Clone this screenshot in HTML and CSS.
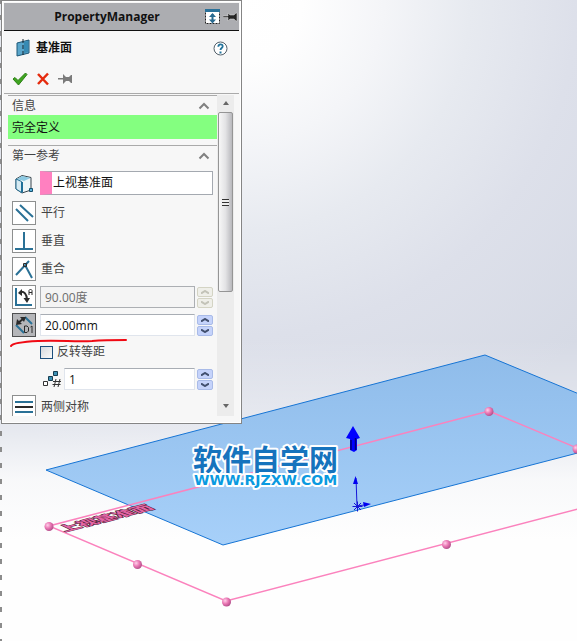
FILE: index.html
```html
<!DOCTYPE html>
<html lang="zh-CN">
<head>
<meta charset="utf-8">
<meta name="viewport" content="width=device-width, initial-scale=1">
<title>PropertyManager</title>
<link rel="stylesheet" href="styles.css">
</head>
<body>
<main class="viewport">
  <svg class="scene" viewBox="0 0 577 641" preserveAspectRatio="xMinYMin slice" role="img" aria-label="上视基准面">
    <defs>
      <linearGradient id="fade" gradientUnits="userSpaceOnUse" x1="0" y1="340" x2="0" y2="540">
        <stop offset="0" stop-color="#fff" stop-opacity="0"/>
        <stop offset=".45" stop-color="#fff" stop-opacity=".4"/>
        <stop offset=".7" stop-color="#fefefe" stop-opacity=".85"/>
        <stop offset="1" stop-color="#fefefe"/>
      </linearGradient>
      <radialGradient id="sky" gradientUnits="userSpaceOnUse" cx="240" cy="0" r="480">
        <stop offset="0" stop-color="#fff"/>
        <stop offset=".13" stop-color="#fefefe"/>
        <stop offset=".3" stop-color="#f4f5f8"/>
        <stop offset=".48" stop-color="#e7eaf0"/>
        <stop offset=".7" stop-color="#dde0ea"/>
        <stop offset="1" stop-color="#d6dae5"/>
      </radialGradient>
      <linearGradient id="plane" x1="0" y1="0" x2="0" y2="1">
        <stop offset="0" stop-color="#8fbcea"/>
        <stop offset="1" stop-color="#a7d0f9"/>
      </linearGradient>
      <radialGradient id="ball" cx=".35" cy=".35" r=".7">
        <stop offset="0" stop-color="#ffd0ea"/>
        <stop offset=".5" stop-color="#ea78b4"/>
        <stop offset="1" stop-color="#b04c88"/>
      </radialGradient>
    </defs>
    <rect width="577" height="641" fill="url(#sky)"/>
    <rect width="577" height="641" fill="url(#fade)"/>
    <path d="M0 -1V641" stroke="#8c8c8c" stroke-width="4" stroke-dasharray="5 11"/>
    <path d="M46 470 485 355 620 411 620 442 223 545Z" fill="url(#plane)" stroke="#1674d4"/>
    <path d="M620 466 489 411 49 526 226 601 620 498" fill="none" stroke="#fb82bd" stroke-width="1.500"/>
    <g fill="url(#ball)">
      <circle cx="489" cy="411.500" r="4.500"/><circle cx="577" cy="449" r="4.500"/><circle cx="49" cy="526.500" r="4.500"/>
      <circle cx="137.500" cy="564.500" r="4.500"/><circle cx="226.500" cy="602" r="4.500"/><circle cx="446.500" cy="544.500" r="4.500"/>
    </g>
    <text class="plane-name" transform="matrix(1 -.26 .7 .33 65 532)">上视基准面</text>
    <path d="M353 426 360 438 357 439V450L354 452 350 450V439L346 438Z" fill="#00f"/>
    <path d="M355.500 438V450M351 440v10" stroke="#000078" stroke-width="1.500"/>
    <g stroke="#1616d8" fill="#0000f0">
      <path d="M357 506 356 478M357 506 364 505M354 503l7 7M361 503l-7 7M352.500 506.500h10M357.500 501.500v10" fill="none"/>
      <path d="M355.500 476 358 484H353ZM363 502 371 504 364 507Z" stroke="none"/>
    </g>
    <text class="mark-title" x="193" y="471">软件自学网</text>
    <text class="mark-url" x="194" y="485">WWW.RJZXW.COM</text>
  </svg>

  <form class="panel">
    <header class="titlebar">
      <h1>PropertyManager</h1>
      <button type="button" class="icon-button" aria-label="展开">
        <svg width="15" height="15" viewBox="0 0 15 15"><path d="M.5.500h14v14H.5z" fill="#fff" stroke="#222" stroke-dasharray="2 1"/><path d="M0 0h15v3H0z" fill="#2a7199"/><path d="M7.500 5v8" stroke="#2a6b90" stroke-width="2"/><path d="M4 8 7.500 4 11 8ZM4 10.500 7.500 14.500 11 10.500Z" fill="#2a6b90"/></svg>
      </button>
      <button type="button" class="icon-button" aria-label="固定">
        <svg width="15" height="12" viewBox="0 0 15 12"><path d="M0 5h5V2l2 2h4l2-2h1v8h-1l-2-2H7l-2 2V6.500H0z" fill="#252525" stroke="#ddd" stroke-width=".5"/></svg>
      </button>
    </header>

    <div class="feature">
      <svg width="14" height="18" viewBox="0 0 14 18"><path d="M1 4 13 1V14L1 17Z" fill="#5aa6cb" stroke="#1d5878"/><path d="M8 3l4-1v11l-4 1z" fill="#378bb4"/><path d="M7 0V18" stroke="#14252e" stroke-dasharray="4 2"/></svg>
      <h2>基准面</h2>
      <button type="button" class="icon-button" aria-label="帮助">
        <svg width="15" height="15" viewBox="0 0 15 15"><circle cx="7.500" cy="7.500" r="6.500" fill="#fff" stroke="#53606a"/><path d="M5.300 5.800C5.300 2.600 9.700 2.700 9.700 5.300 9.700 7 7.500 7 7.500 9" fill="none" stroke="#23749c" stroke-width="1.800"/><path d="M6.500 10.500h2v2h-2z" fill="#23749c"/></svg>
      </button>
    </div>

    <div class="actions">
      <button type="submit" class="icon-button" aria-label="确定"><svg width="16" height="14" viewBox="0 0 16 14"><path d="M1 7 3 5.500 6 8.500 13.500 1 15 2.500 6.500 13Z" fill="#3fa51f" stroke="#2b8014"/></svg></button>
      <button type="reset" class="icon-button" aria-label="取消"><svg width="14" height="14" viewBox="0 0 14 14"><path d="M2 2 12 12.500M12 1.500 2 12" stroke="#e52b0e" stroke-width="2.500"/></svg></button>
      <button type="button" class="icon-button" aria-label="保持可见"><svg width="15" height="12" viewBox="0 0 15 12"><path d="M0 5h5V1l3 3h3l2-2h1v8h-1l-2-2H8l-3 3V6.500H0z" fill="#7b7b7b"/></svg></button>
    </div>

    <div class="body">
      <div class="content">
        <section class="group">
          <h3>信息 <svg width="12" height="8" viewBox="0 0 12 8"><path d="M1.500 6.500 6 2l4.500 4.500"/></svg></h3>
          <p class="status">完全定义</p>
        </section>
        <section class="group">
          <h3>第一参考 <svg width="12" height="8" viewBox="0 0 12 8"><path d="M1.500 6.500 6 2l4.500 4.500"/></svg></h3>
          <div class="rows">
            <div class="row reference">
              <svg class="glyph" width="24" height="24" viewBox="0 0 24 24"><path d="M4 8 10 4.500 19 6.500V19L10 22 4 18Z" fill="#eef5f7" stroke="#38454c"/><path d="M4.500 8 10 5 18.500 7 12 10Z" fill="#8cc9e2"/><path d="M4 8 9.500 10.500V21.500L4 18Z" fill="#d6eaf2" stroke="#256f94"/><path d="M10 11V21.500" stroke="#1f6f98" stroke-width="2"/><path d="M17.500 17.500h3v3h-3z" fill="#5cb4dc" stroke="#15506e"/></svg>
              <input class="field picked" type="text" aria-label="第一参考" value="上视基准面">
            </div>
            <div class="row">
              <button type="button" class="tool" id="parallel" aria-label="平行"><svg width="22" height="22" viewBox="0 0 22 22"><path d="M3 7 15 19M7 3 20 15"/></svg></button>
              <label for="parallel">平行</label>
            </div>
            <div class="row">
              <button type="button" class="tool" id="perpendicular" aria-label="垂直"><svg width="22" height="22" viewBox="0 0 22 22"><path d="M2 19H20M11 2V19"/></svg></button>
              <label for="perpendicular">垂直</label>
            </div>
            <div class="row">
              <button type="button" class="tool" id="coincident" aria-label="重合"><svg width="22" height="22" viewBox="0 0 22 22"><path d="M3 17 16 3M12 7 19 20"/><path class="ink" d="M10.500 5.500h3v3h-3z"/></svg></button>
              <label for="coincident">重合</label>
            </div>
            <div class="row">
              <button type="button" class="tool" aria-label="角度"><svg width="22" height="22" viewBox="0 0 22 22"><path d="M3 2V19H19"/><path class="ink bold" d="M7 6C11 5 14 8 14 14"/><path class="fill" d="M5 7 9 3V10ZM10.500 12H17L14 17Z"/><path class="ink" d="M16 9V4.500L17.500 3 19 4.500V9M16 6.500h3"/></svg></button>
              <input class="field" type="text" aria-label="角度" value="90.00度" disabled>
              <span class="spin off"><button type="button" disabled aria-label="增加"><svg width="8" height="4" viewBox="0 0 8 4"><path d="M0 3.500 4 1l4 2.500"/></svg></button><button type="button" disabled aria-label="减少"><svg width="8" height="4" viewBox="0 0 8 4"><path d="M0 .500 4 3 8 .5"/></svg></button></span>
            </div>
            <div class="row offset">
              <button type="button" class="tool pressed" aria-label="偏移距离"><svg width="22" height="22" viewBox="0 0 22 22"><path d="M3 11 11 19M12 3 19 10"/><path class="ink bold" d="M5 9 10 5"/><path class="fill" d="M3 11 4 5 9 10ZM7 3 13 3 11 8Z"/><path class="ink" d="M11.500 12v6.500H14l1.500-1.500v-3.500L14 12ZM17.500 13 19 12v7"/></svg></button>
              <input class="field" type="text" aria-label="偏移距离" value="20.00mm">
              <span class="spin"><button type="button" aria-label="增加"><svg width="8" height="4" viewBox="0 0 8 4"><path d="M0 3.500 4 1l4 2.500"/></svg></button><button type="button" aria-label="减少"><svg width="8" height="4" viewBox="0 0 8 4"><path d="M0 .500 4 3 8 .5"/></svg></button></span>
              <svg class="stroke-mark" width="120" height="10" viewBox="0 0 120 10"><path d="M1 8C2 6 8 4 28 3 50 2 65 4 82 3 94 2 106 2 116 2"/></svg>
            </div>
            <div class="row flip">
              <input type="checkbox" id="flip"><label for="flip">反转等距</label>
            </div>
            <div class="row count">
              <svg width="20" height="20" viewBox="0 0 20 20"><path d="M1.500 12.500h4v4h-4z" fill="#fff" stroke="#333"/><path d="M6.500 7.500h4v4h-4zM11.500 2.500h4v4h-4z" fill="#3c91b4" stroke="#173c50"/><path d="M14 10l-2 8M18 10l-2 8M11 12.500h8M10.500 15.500h8" stroke="#333" fill="none"/></svg>
              <input class="field" type="text" aria-label="基准面数" value="1">
              <span class="spin"><button type="button" aria-label="增加"><svg width="8" height="4" viewBox="0 0 8 4"><path d="M0 3.500 4 1l4 2.500"/></svg></button><button type="button" aria-label="减少"><svg width="8" height="4" viewBox="0 0 8 4"><path d="M0 .500 4 3 8 .5"/></svg></button></span>
            </div>
            <div class="row">
              <button type="button" class="tool" id="mid" aria-label="两侧对称"><svg width="22" height="22" viewBox="0 0 22 22"><path d="M2 6H20M2 16H20"/><path class="ink bold" d="M2 11H20"/></svg></button>
              <label for="mid">两侧对称</label>
            </div>
          </div>
        </section>
      </div>
      <div class="scrollbar">
        <svg width="6" height="4" viewBox="0 0 6 4"><path d="M0 4 3 0l3 4z" fill="#666"/></svg>
        <div class="thumb"><span class="grip"></span></div>
        <svg width="6" height="4" viewBox="0 0 6 4"><path d="M0 0h6L3 4z" fill="#666"/></svg>
      </div>
    </div>
  </form>
</main>
</body>
</html>
```

FILE: styles.css
```css
* { box-sizing: border-box; }

body {
  margin: 0;
  font: 12px/16px "Open Sans", "Noto Sans CJK SC", sans-serif;
  color: #111;
}

h1, h2, h3, p { margin: 0; font-size: inherit; }
svg { display: block; flex: none; }
button, input { font: inherit; color: inherit; }

.viewport {
  position: relative;
  min-height: 100vh;
  overflow: hidden;
  padding-left: 1px;
}

.scene {
  position: absolute;
  inset: 0;
  width: 100%;
  height: 100%;
}

.plane-name {
  font: 700 18px "Noto Sans CJK SC", sans-serif;
  fill: #e565a6;
  stroke: #54283f;
  stroke-width: 2px;
  paint-order: stroke;
}

.mark-title, .mark-url {
  fill: #1673bd;
  stroke: #fff;
  stroke-width: 4px;
  stroke-linejoin: round;
  paint-order: stroke;
}

.mark-title { font: 700 29px "Noto Sans CJK SC", sans-serif; }
.mark-url { font: 700 14px "DejaVu Sans", sans-serif; fill: #0b9ae0; }

.panel {
  position: relative;
  width: 241px;
  padding: 2px 2px 6px;
  background: #f7f7f7;
  border: 1px solid #858585;
  box-shadow: inset 0 0 0 1px #fff;
}

.icon-button {
  display: block;
  padding: 0;
  border: 0;
  background: none;
}

.titlebar {
  display: flex;
  align-items: center;
  gap: 3px;
  height: 28px;
  padding-right: 1px;
  background: #acadb1;
  border-bottom: 1px solid #111;
}

.titlebar h1 {
  flex: 1;
  padding-left: 8px;
  text-align: center;
  font-weight: 700;
}

.feature {
  display: flex;
  align-items: center;
  gap: 6px;
  height: 34px;
  padding: 0 11px 0 12px;
}

.feature h2 { flex: 1; font-weight: 700; }

.actions {
  display: flex;
  align-items: center;
  gap: 8px;
  height: 29px;
  padding-left: 8px;
  border-bottom: 1px solid #aaa;
}

.body {
  display: flex;
  height: 321px;
  margin: 1px 5px 1px 4px;
  overflow: hidden;
}

.content { flex: 1; min-width: 0; }

.group { border-top: 1px solid #aaa; color: #444; }
.group + .group { margin-top: 6px; }

.group h3 {
  display: flex;
  align-items: center;
  justify-content: space-between;
  height: 19px;
  padding: 0 7px 0 4px;
  font-weight: 400;
}

.group h3 path { fill: none; stroke: #808080; stroke-width: 2; }

.status {
  height: 24px;
  padding: 5px 4px 3px;
  background: #84ff80;
  color: #111;
}

.rows {
  display: grid;
  grid-template-columns: minmax(0, 1fr);
  gap: 4px;
  padding: 6px 4px 0;
}

.row {
  display: flex;
  align-items: center;
  gap: 4px;
  height: 24px;
}

.reference { margin-bottom: 2px; }

.tool {
  display: grid;
  place-items: center;
  flex: none;
  width: 24px;
  height: 24px;
  padding: 0;
  background: #fff;
  border: 1px solid #8d8f8f;
}

.tool path { fill: none; stroke: #2a7196; stroke-width: 2; }
.tool path.ink { stroke: #2b2b2b; stroke-width: 1; }
.tool path.bold { stroke-width: 2; }
.tool path.fill { fill: #2b2b2b; stroke: none; }
.tool + label { padding-left: 1px; }

.pressed { background: #b5b6b9; border-color: #4e4f50; }

.field {
  flex: 1;
  min-width: 0;
  height: 22px;
  padding: 0 4px;
  border: 1px solid #e0e5ed;
  border-top-color: #a8adb4;
  background: #fff;
  color: #111;
}

.field:disabled { background: #f4f4f4; border-color: #acafb3; color: #6c6c6c; }

.picked {
  height: 24px;
  padding: 0 1px 2px;
  border: 1px solid #a4a9b0;
  border-left: 12px solid #ff80c0;
}

.spin { display: grid; gap: 1px; flex: none; margin-left: -2px; }

.spin button {
  display: grid;
  place-items: center;
  width: 16px;
  height: 10px;
  padding: 0;
  border: 1px solid #a9bbe8;
  border-radius: 2px;
  background: #c5d3fb;
}

.spin path { fill: none; stroke: #42506f; stroke-width: 2; }
.off button { border-color: #d4d4c4; background: #efefe9; }
.off path { stroke: #c3c3b8; }

.offset { position: relative; }

.stroke-mark { position: absolute; left: -2px; top: 25px; }
.stroke-mark path { fill: none; stroke: #f00a14; stroke-width: 2; stroke-linecap: round; }

.flip { padding-left: 28px; height: 22px; }

.flip input {
  appearance: none;
  width: 13px;
  height: 13px;
  margin: 0;
  border: 1px solid #1d4f7c;
  background: linear-gradient(135deg, #d5d8dc, #fafafa);
}

.count { padding-left: 30px; gap: 2px; }
.count .spin { margin-left: 0; }

.scrollbar {
  display: flex;
  flex-direction: column;
  align-items: center;
  width: 17px;
  padding: 6px 1px 8px;
  background: #ececec;
}

.thumb {
  display: grid;
  place-items: center;
  width: 15px;
  height: 180px;
  margin: 7px 0 auto;
  border: 1px solid #959595;
  border-radius: 2px;
  background: linear-gradient(90deg, #f7f7f7, #e3e3e5 50%, #b8b8bc);
}

.grip {
  width: 7px;
  height: 7px;
  background: repeating-linear-gradient(#333 0 1px, #eee 1px 3px);
}
```
